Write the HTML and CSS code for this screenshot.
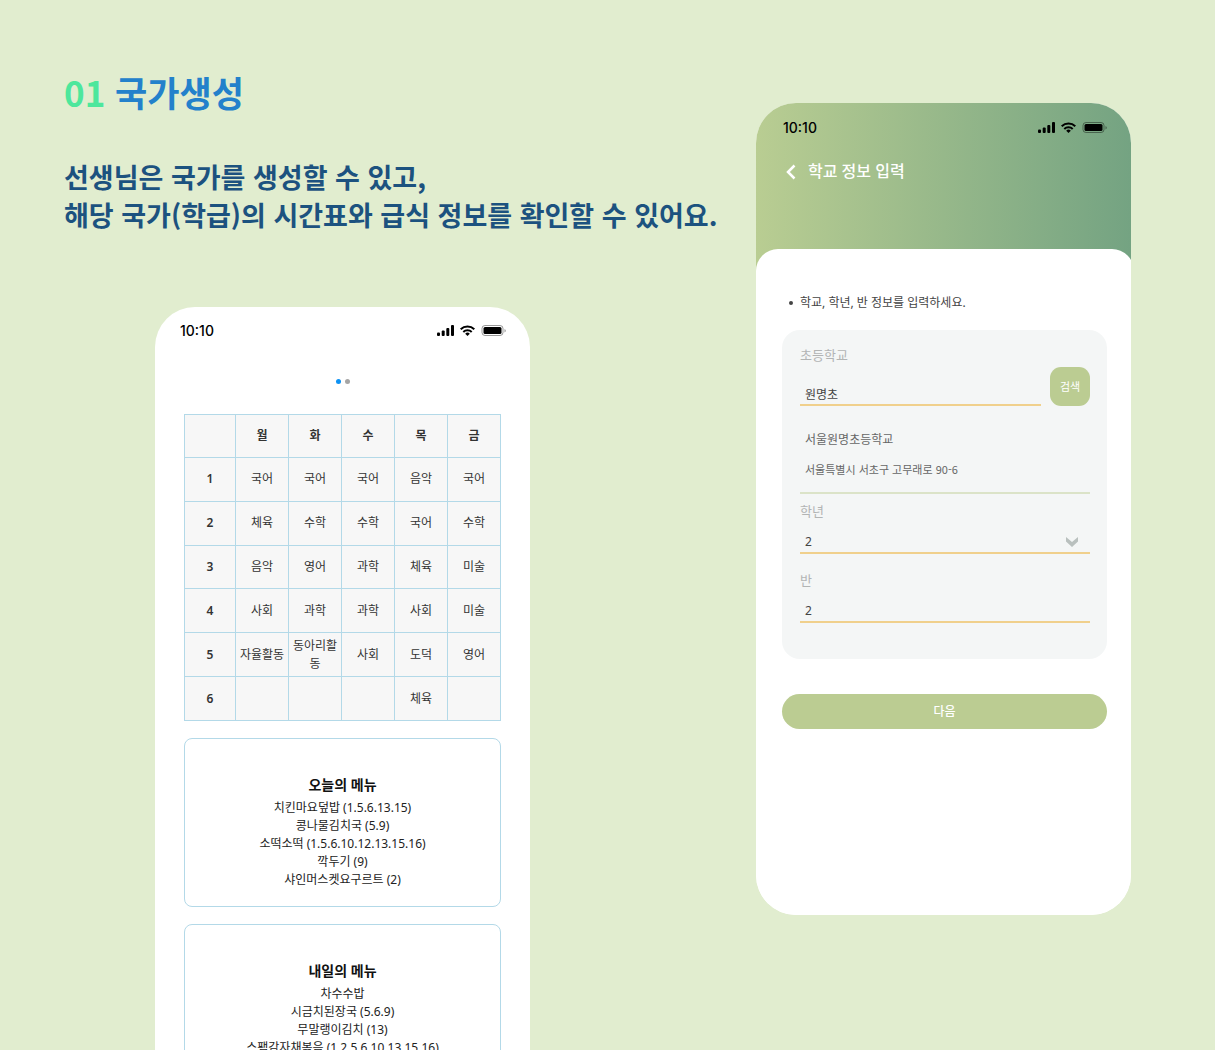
FILE: index.html
```html
<!DOCTYPE html>
<html lang="ko">
<head>
<meta charset="utf-8">
<meta name="viewport" content="width=device-width, initial-scale=1">
<title>국가생성</title>
<link rel="stylesheet" href="styles.css">
</head>
<body>
<svg class="defs" aria-hidden="true">
  <symbol id="status-icons" viewBox="0 0 70 12">
    <rect x="0" y="7.500" width="3" height="3.500" rx="1"/>
    <rect x="4.700" y="5.500" width="3" height="5.500" rx="1"/>
    <rect x="9.300" y="3" width="3" height="8" rx="1"/>
    <rect x="14" y="0" width="3" height="11" rx="1"/>
    <g fill="none" stroke="currentColor" stroke-width="2">
      <path d="M23.700 4.200a9.800 9.800 0 0 1 13.600 0"/>
      <path d="M26.300 7a6 6 0 0 1 8.400 0"/>
    </g>
    <path d="M30.500 11 28.200 8.700a3.300 3.300 0 0 1 4.600 0z"/>
    <rect x="45" y=".5" width="21" height="10" rx="3" fill="none" stroke="currentColor" opacity=".4"/>
    <rect x="46.500" y="2" width="18" height="7" rx="1.500"/>
    <path d="M67.500 4v3.500q1.300-.5 1.300-1.750T67.500 4z" opacity=".4"/>
  </symbol>
</svg>
<main class="page">
  <section class="intro">
    <h1 class="title"><span class="title-number">01</span> 국가생성</h1>
    <p class="lead">선생님은 국가를 생성할 수 있고,<br>해당 국가(학급)의 시간표와 급식 정보를 확인할 수 있어요.</p>

    <article class="phone phone-timetable">
      <div class="status"><span>10:10</span><svg class="status-icons"><use href="#status-icons"/></svg></div>
      <div class="dots"><span class="dot dot-active"></span><span class="dot"></span></div>
      <table class="timetable">
        <thead>
          <tr><th class="period"></th><th>월</th><th>화</th><th>수</th><th>목</th><th>금</th></tr>
        </thead>
        <tbody>
          <tr><th>1</th><td>국어</td><td>국어</td><td>국어</td><td>음악</td><td>국어</td></tr>
          <tr><th>2</th><td>체육</td><td>수학</td><td>수학</td><td>국어</td><td>수학</td></tr>
          <tr><th>3</th><td>음악</td><td>영어</td><td>과학</td><td>체육</td><td>미술</td></tr>
          <tr><th>4</th><td>사회</td><td>과학</td><td>과학</td><td>사회</td><td>미술</td></tr>
          <tr><th>5</th><td>자율활동</td><td>동아리활동</td><td>사회</td><td>도덕</td><td>영어</td></tr>
          <tr><th>6</th><td></td><td></td><td></td><td>체육</td><td></td></tr>
        </tbody>
      </table>
      <section class="menu">
        <h2 class="menu-title">오늘의 메뉴</h2>
        <ul class="menu-list">
          <li>치킨마요덮밥 (1.5.6.13.15)</li>
          <li>콩나물김치국 (5.9)</li>
          <li>소떡소떡 (1.5.6.10.12.13.15.16)</li>
          <li>깍두기 (9)</li>
          <li>샤인머스켓요구르트 (2)</li>
        </ul>
      </section>
      <section class="menu">
        <h2 class="menu-title">내일의 메뉴</h2>
        <ul class="menu-list">
          <li>차수수밥</li>
          <li>시금치된장국 (5.6.9)</li>
          <li>무말랭이김치 (13)</li>
          <li>스팸감자채볶음 (1.2.5.6.10.13.15.16)</li>
        </ul>
      </section>
    </article>
  </section>

  <article class="phone phone-school">
    <header class="school-header">
      <div class="status"><span>10:10</span><svg class="status-icons"><use href="#status-icons"/></svg></div>
      <div class="nav">
        <button class="back" type="button" aria-label="뒤로">
          <svg width="10" height="16" viewBox="0 0 10 16"><path d="M8.500 1.500 2 8l6.500 6.500" fill="none" stroke="currentColor" stroke-width="2.500"/></svg>
        </button>
        <h2 class="nav-title">학교 정보 입력</h2>
      </div>
    </header>
    <form class="sheet">
      <p class="hint">학교, 학년, 반 정보를 입력하세요.</p>
      <div class="panel">
        <label class="label" for="school">초등학교</label>
        <div class="search">
          <input class="field" id="school" type="text" value="원명초">
          <button class="search-button" type="button">검색</button>
        </div>
        <div class="result">
          <p class="result-name">서울원명초등학교</p>
          <p class="result-address">서울특별시 서초구 고무래로 90-6</p>
        </div>
        <label class="label" for="grade">학년</label>
        <div class="select">
          <select class="field" id="grade"><option>2</option></select>
          <svg class="chevron" width="12" height="10" viewBox="0 0 12 10"><path d="M0 0 6 5 12 0V4.500L6 10 0 4.500z" fill="#b9c0be"/></svg>
        </div>
        <label class="label label-class" for="class">반</label>
        <input class="field" id="class" type="text" value="2">
      </div>
      <button class="next" type="submit">다음</button>
    </form>
  </article>
</main>
</body>
</html>
```
FILE: styles.css
```css
* {
  box-sizing: border-box;
}

body,
h1,
h2,
p,
ul {
  margin: 0;
  padding: 0;
}

body {
  background: #e1edcf;
  color: #222;
  font: 12px/18px "Noto Sans", "Noto Sans CJK KR", sans-serif;
}

button,
input,
select {
  font: inherit;
  color: inherit;
  border: 0;
  padding: 0;
  background: none;
}

.defs {
  display: none;
}

.page {
  display: flex;
  align-items: flex-start;
  height: 100vh;
  overflow: hidden;
  padding: 0 84px 0 64px;
}

.intro {
  flex: 1;
  padding-top: 67px;
}

.title,
.lead {
  font-family: "Noto Sans CJK KR", sans-serif;
  font-weight: 700;
  white-space: nowrap;
}

.title {
  color: #2381cb;
  font-size: 35px;
  line-height: 50px;
}

.title-number {
  color: #4de79c;
}

.lead {
  margin-top: 41px;
  color: #1c527f;
  font-size: 27px;
  line-height: 38px;
}

.phone {
  flex: none;
  width: 375px;
  overflow: hidden;
  border-radius: 40px;
  background: #fff;
}

.status {
  display: flex;
  justify-content: space-between;
  align-items: center;
  height: 20px;
  color: #000;
  font: 500 14px/20px Inter, sans-serif;
}

.status-icons {
  width: 70px;
  height: 12px;
  fill: currentColor;
}

/* timetable phone */

.phone-timetable {
  margin: 73px 0 0 91px;
  padding: 14px 29px 40px;
}

.phone-timetable .status {
  margin: 0 -6px 0 -4px;
}

.dots {
  display: flex;
  justify-content: center;
  gap: 4px;
  margin: 38px 0 30px;
}

.dot {
  width: 5px;
  height: 5px;
  border-radius: 50%;
  background: #a5a5a5;
}

.dot-active {
  background: #0d92f4;
}

.timetable {
  width: 100%;
  height: 307px;
  table-layout: fixed;
  border-collapse: collapse;
  background: #f7f7f7;
  color: #333;
  text-align: center;
}

.timetable th,
.timetable td {
  height: 43px;
  padding: 0;
  border: 1px solid #b3d9e8;
}

.timetable th {
  font-weight: 600;
}

.timetable .period {
  width: 51px;
}

.menu {
  margin-top: 17px;
  padding: 34px 0 17px;
  border: 1px solid #b3d9e8;
  border-radius: 8px;
  text-align: center;
}

.menu-title {
  color: #111;
  font-size: 14px;
  line-height: 24px;
}

.menu-list {
  margin-top: 2px;
  list-style: none;
}

/* school phone */

.phone-school {
  display: flex;
  flex-direction: column;
  min-height: 812px;
  margin-top: 103px;
}

.school-header {
  height: 168px;
  padding: 15px 23px 0 27px;
  background: linear-gradient(90deg, #b9cd92, #74a382);
}

.nav {
  display: flex;
  align-items: center;
  gap: 12px;
  margin: 21px 0 0 3px;
  color: #fff;
}

.back {
  display: flex;
  padding-top: 2px;
}

.nav-title {
  font-size: 16px;
  font-weight: 500;
  line-height: 24px;
}

.sheet {
  flex: 1;
  margin: -22px -3px 0 0;
  padding: 45px 27px 0 26px;
  border-radius: 22px 22px 0 0;
  background: #fff;
}

.hint {
  display: flex;
  align-items: center;
  gap: 7px;
  margin-left: 7px;
  color: #444;
}

.hint::before {
  content: "";
  width: 4px;
  height: 4px;
  border-radius: 50%;
  background: #444;
}

.panel {
  margin-top: 18px;
  padding: 13px 17px 36px 18px;
  border-radius: 18px;
  background: #f4f6f6;
}

.label {
  display: block;
  color: #b2b4b4;
  font-size: 13px;
  line-height: 24px;
}

.field {
  display: block;
  width: 100%;
  height: 31px;
  padding: 8px 5px 0;
  border-bottom: 2px solid #f0d08c;
  border-radius: 0;
  color: #444;
  appearance: none;
}

.search {
  display: flex;
  align-items: flex-end;
  gap: 9px;
}

.search-button {
  flex: none;
  width: 40px;
  height: 39px;
  border-radius: 11px;
  background: #bbcc92;
  color: #fff;
  font-size: 11px;
}

.result {
  padding: 22px 5px 12px;
  margin: 0 0 5px;
  border-bottom: 2px solid #dbe3c8;
  color: #666;
}

.result-name {
  line-height: 24px;
}

.result-address {
  margin-top: 6px;
  font-family: "Noto Sans CJK KR", sans-serif;
  font-size: 11px;
  line-height: 22px;
}

.select {
  position: relative;
}

.chevron {
  position: absolute;
  right: 12px;
  bottom: 7px;
  pointer-events: none;
}

.label-class {
  margin-top: 14px;
}

.next {
  display: block;
  width: 100%;
  height: 35px;
  margin-top: 35px;
  border-radius: 18px;
  background: #bbcc92;
  color: #fff;
  font-weight: 500;
}
```
